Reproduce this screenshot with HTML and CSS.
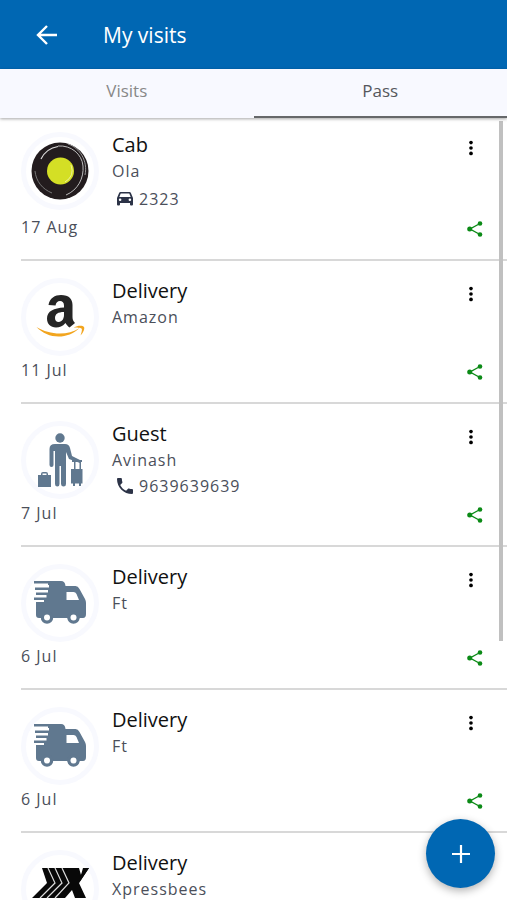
FILE: index.html
```html
<!DOCTYPE html>
<html lang="en">
<head>
<meta charset="utf-8">
<meta name="viewport" content="width=device-width, initial-scale=1">
<title>My visits</title>
<link rel="stylesheet" href="styles.css">
</head>
<body>
<svg class="defs" aria-hidden="true">
  <symbol id="more" viewBox="0 0 24 24"><circle cx="12" cy="5.5" r="2.2"/><circle cx="12" cy="12" r="2.2"/><circle cx="12" cy="18.5" r="2.2"/></symbol>
  <symbol id="share" viewBox="0 0 16 16"><path d="M13 2.5 3 8l10 5.500" fill="none" stroke="currentColor" stroke-width="1.400"/><circle cx="13" cy="2.500" r="2.300"/><circle cx="2.700" cy="8" r="2.500"/><circle cx="13" cy="13.500" r="2.300"/></symbol>
  <symbol id="truck" viewBox="0 0 54 44">
    <path d="M1 0h27q4 0 4.500 5h10q2.500 0 4 3l5.500 10q1 2 1 4v11q0 4-3 4h-3.500a6.200 6.200 0 0 1-12 0H20a6.200 6.200 0 0 1-12 0H6q-3 0-3-3V21h8v-2H1v-2.500h12.500V14H3v-2.500h12V9H2V6.500h14V4H15V2.500H1z"/>
    <circle cx="14" cy="36.500" r="6.200"/>
    <circle cx="40.500" cy="36.500" r="6.200"/>
    <path d="M33.500 11h7q2 0 3 2l2.500 6H33.500z" fill="#fff"/>
    <circle cx="14" cy="36.500" r="3" fill="#fff"/>
    <circle cx="40.500" cy="36.500" r="3" fill="#fff"/>
  </symbol>
</svg>

<header class="appbar">
  <button class="icon-button back" aria-label="Back">
    <svg viewBox="0 0 24 24" width="24" height="24"><path d="M22 12H3.500M12 3 3 12l9 9" fill="none" stroke="currentColor" stroke-width="2.400"/></svg>
  </button>
  <h1>My visits</h1>
</header>

<nav class="tabs">
  <a class="tab" href="#visits">Visits</a>
  <a class="tab active" href="#pass" aria-current="page">Pass</a>
</nav>

<main class="content">
  <ul class="passes">
    <li class="pass">
      <div class="avatar">
        <svg viewBox="0 0 60 60" width="60" height="60"><circle cx="30" cy="30" r="28.500" fill="#231c1e"/><path d="M11 18A23 23 0 0 1 28 5.500" fill="none" stroke="#ddd" stroke-width="1.200"/><path d="M28 5c13-1 24 8 25 20s-5 24-17 29" fill="none" stroke="#bbb" stroke-width="1"/><path d="M38 3c12 4 20 17 17 31" fill="none" stroke="#999" stroke-width="1"/><path d="M5 30c1 10 7 18 17 22" fill="none" stroke="#777" stroke-width="1"/><circle cx="30.500" cy="30" r="13.500" fill="#d4df25"/><path d="M41 24q4 11-6 17" fill="none" stroke="#edf29a" stroke-width="1"/></svg>
      </div>
      <div class="info">
        <h2>Cab</h2>
        <p>Ola</p>
        <p class="detail vehicle"><svg viewBox="0 0 16 16" width="16" height="16"><path fill-rule="evenodd" d="M3.500 0h9q1 0 1.400 1L16 6v6.500q0 1-1 1h-1q-1 0-1-1V11H3v1.500q0 1-1 1H1q-1 0-1-1V6L2.100 1Q2.500 0 3.500 0zM3.700 1.500 2.300 5h11.400l-1.400-3.500zM1.800 7.800a1.300 1.300 0 1 0 2.600 0 1.300 1.300 0 1 0-2.600 0zm9.800 0a1.300 1.300 0 1 0 2.600 0 1.300 1.300 0 1 0-2.600 0z"/></svg>2323</p>
      </div>
      <button class="icon-button more" aria-label="More options"><svg width="24" height="20"><use href="#more"/></svg></button>
      <time class="date">17 Aug</time>
      <button class="icon-button share" aria-label="Share pass"><svg width="16" height="16"><use href="#share"/></svg></button>
    </li>
    <li class="pass">
      <div class="avatar">
        <svg viewBox="0 0 60 60" width="60" height="60"><path fill="#252525" fill-rule="evenodd" d="M18.500 18C19.500 11 25 8 31 8c8 0 11.500 4 11.500 10v12c0 3 1 4 2.500 6l-5.500 4.500c-2-1.500-3-3-4-4.500-3 3.500-6 4.500-9.500 4.500-5.500 0-9-3.500-9-9 0-7.500 7-10.500 17-11v-2c0-3-1.500-4.500-4-4.500-2.500 0-4 1.500-4.500 4.500zM34 25c-6 0-9 2-9 6 0 2.500 1.500 4 3.500 4 4 0 5.500-4 5.500-7z"/><path d="M6.500 40c13 8 31 9 43 1-12 12-32 11-43-1z" fill="#f2a51f"/><path d="M44 40.500c4-2.500 9-2 10-.5 1 2-1 6-3.500 8.500 1-3 2-6 1-7s-5-.5-7.500-1z" fill="#f2a51f"/></svg>
      </div>
      <div class="info"><h2>Delivery</h2><p>Amazon</p></div>
      <button class="icon-button more" aria-label="More options"><svg width="24" height="20"><use href="#more"/></svg></button>
      <time class="date">11 Jul</time>
      <button class="icon-button share" aria-label="Share pass"><svg width="16" height="16"><use href="#share"/></svg></button>
    </li>
    <li class="pass">
      <div class="avatar">
        <svg viewBox="0 0 60 60" width="60" height="60" fill="currentColor"><circle cx="30" cy="8" r="4.700"/><path d="M25 14h10q4 0 5 4l2 8 9 4.500-1 2.500-11-4-3-7v32q0 2.500-2.400 2.500T31 54V36h-1.500v18q0 2.500-2.200 2.500T25 54V21h-1.500v14q0 2-2 2t-2-2V19q0-5 5.500-5z"/><path d="M8 45h3v-1q0-2 2-2h3q2 0 2 2v1h3v12H8zm4.500 0h4v-1.500h-4zM42 30h10v2h-1v7h1.500v14.500H51V56h-2v-2.500h-4V56h-2v-2.500h-2V39h3v-7h-2zm3.500 2v7h4v-7z" fill-rule="evenodd"/></svg>
      </div>
      <div class="info">
        <h2>Guest</h2>
        <p>Avinash</p>
        <p class="detail"><svg viewBox="3 3 18 18" width="16" height="16"><path d="M6.620 10.790c1.440 2.830 3.760 5.140 6.590 6.590l2.200-2.200c.27-.27.67-.36 1.020-.24 1.120.37 2.330.57 3.570.57.550 0 1 .45 1 1V20c0 .55-.45 1-1 1-9.390 0-17-7.610-17-17 0-.55.45-1 1-1h3.500c.55 0 1 .45 1 1 0 1.250.2 2.450.57 3.570.11.35.03.74-.25 1.020z"/></svg>9639639639</p>
      </div>
      <button class="icon-button more" aria-label="More options"><svg width="24" height="20"><use href="#more"/></svg></button>
      <time class="date">7 Jul</time>
      <button class="icon-button share" aria-label="Share pass"><svg width="16" height="16"><use href="#share"/></svg></button>
    </li>
    <li class="pass">
      <div class="avatar"><svg width="54" height="44" fill="currentColor"><use href="#truck"/></svg></div>
      <div class="info"><h2>Delivery</h2><p>Ft</p></div>
      <button class="icon-button more" aria-label="More options"><svg width="24" height="20"><use href="#more"/></svg></button>
      <time class="date">6 Jul</time>
      <button class="icon-button share" aria-label="Share pass"><svg width="16" height="16"><use href="#share"/></svg></button>
    </li>
    <li class="pass">
      <div class="avatar"><svg width="54" height="44" fill="currentColor"><use href="#truck"/></svg></div>
      <div class="info"><h2>Delivery</h2><p>Ft</p></div>
      <button class="icon-button more" aria-label="More options"><svg width="24" height="20"><use href="#more"/></svg></button>
      <time class="date">6 Jul</time>
      <button class="icon-button share" aria-label="Share pass"><svg width="16" height="16"><use href="#share"/></svg></button>
    </li>
    <li class="pass">
      <div class="avatar">
        <svg viewBox="0 0 60 44" width="60" height="44"><path d="M12 1h37l2 7 4-7h4L49 16l7 15H45l-3-8-7 8H2l15-15z" fill="#080808"/><path d="M51 8l2-7h6L49 16z" fill="#080808"/><path d="M18 1l7 15L10 31M25 1l7 15L17 31M32 1l7 15L25 31" fill="none" stroke="#ddd" stroke-width="1.200"/></svg>
      </div>
      <div class="info"><h2>Delivery</h2><p>Xpressbees</p></div>
    </li>
  </ul>
  <div class="scroll-thumb"></div>
  <button class="fab" aria-label="Add pass"><svg viewBox="0 0 20 20" width="20" height="20"><path d="M10 1v18M1 10h18" fill="none" stroke="currentColor" stroke-width="2.200"/></svg></button>
</main>
</body>
</html>
```
FILE: styles.css
```css
* { box-sizing: border-box; }

body {
  margin: 0;
  height: 100vh;
  display: flex;
  flex-direction: column;
  overflow: hidden;
  background: #fff;
  color: #111;
  font-family: "Open Sans", "Noto Sans", sans-serif;
  font-size: 16px;
}

.defs { display: none; }

h1, h2, p, ul { margin: 0; padding: 0; font-weight: 400; }

.icon-button {
  display: flex;
  align-items: center;
  justify-content: center;
  padding: 0;
  border: 0;
  background: none;
  color: inherit;
  cursor: pointer;
}

.icon-button svg { fill: currentColor; }

.appbar {
  display: flex;
  align-items: center;
  gap: 44px;
  flex: none;
  height: 69px;
  padding: 0 35px;
  background: #0067b3;
  color: #fff;
}

.back { width: 24px; height: 24px; }

.appbar h1 { font-size: 21px; line-height: 28px; }

.tabs {
  position: relative;
  z-index: 1;
  display: flex;
  flex: none;
  background: #f8f9ff;
  box-shadow: 0 1px 3px rgba(0, 0, 0, 0.35);
}

.tab {
  flex: 1;
  padding: 10px 0 13px;
  border-bottom: 2px solid transparent;
  color: #888;
  font-size: 17px;
  line-height: 24px;
  text-align: center;
  text-decoration: none;
}

.tab.active { border-color: #66686a; color: #55575c; }

.content {
  position: relative;
  flex: 1;
  min-height: 0;
}

.passes {
  height: 100%;
  overflow-y: auto;
  scrollbar-width: none;
  list-style: none;
}

.pass {
  display: grid;
  grid-template-columns: 78px 1fr 24px;
  grid-template-rows: minmax(80px, auto) 24px;
  column-gap: 13px;
  margin-left: 21px;
  padding: 17px 24px 20px 0;
  border-bottom: 2px solid #d8d8d8;
}

.pass:first-child { padding-top: 14px; }

.avatar {
  display: flex;
  align-items: center;
  justify-content: center;
  width: 78px;
  height: 78px;
  border: 5px solid #f8f9fe;
  border-radius: 50%;
  color: #60788f;
}

.avatar svg { flex: none; }

.info h2 { font-size: 20px; line-height: 26px; }

.info p, .date {
  color: #4b4f5a;
  letter-spacing: 1px;
  line-height: 26px;
}

.info .detail {
  display: flex;
  align-items: center;
  gap: 6px;
  padding-left: 5px;
}

.info .vehicle { line-height: 31px; }

.detail svg { fill: #2c3347; }

.more { width: 24px; height: 24px; margin-top: 4px; color: #000; }

.pass .date { grid-column: 1 / 3; line-height: 24px; }

.share {
  justify-content: flex-end;
  justify-self: end;
  width: 24px;
  height: 24px;
  margin-top: 2px;
  color: #0b8a16;
}

.scroll-thumb {
  position: absolute;
  top: 3px;
  right: 4px;
  width: 4px;
  height: 66.5%;
  background: #c0c0c0;
}

.fab {
  position: absolute;
  right: 12px;
  bottom: 12px;
  display: flex;
  align-items: center;
  justify-content: center;
  width: 69px;
  height: 69px;
  padding: 0;
  border: 0;
  border-radius: 50%;
  background: #0067b3;
  box-shadow: 0 3px 8px rgba(0, 0, 0, 0.3);
  color: #fff;
  cursor: pointer;
}
```
